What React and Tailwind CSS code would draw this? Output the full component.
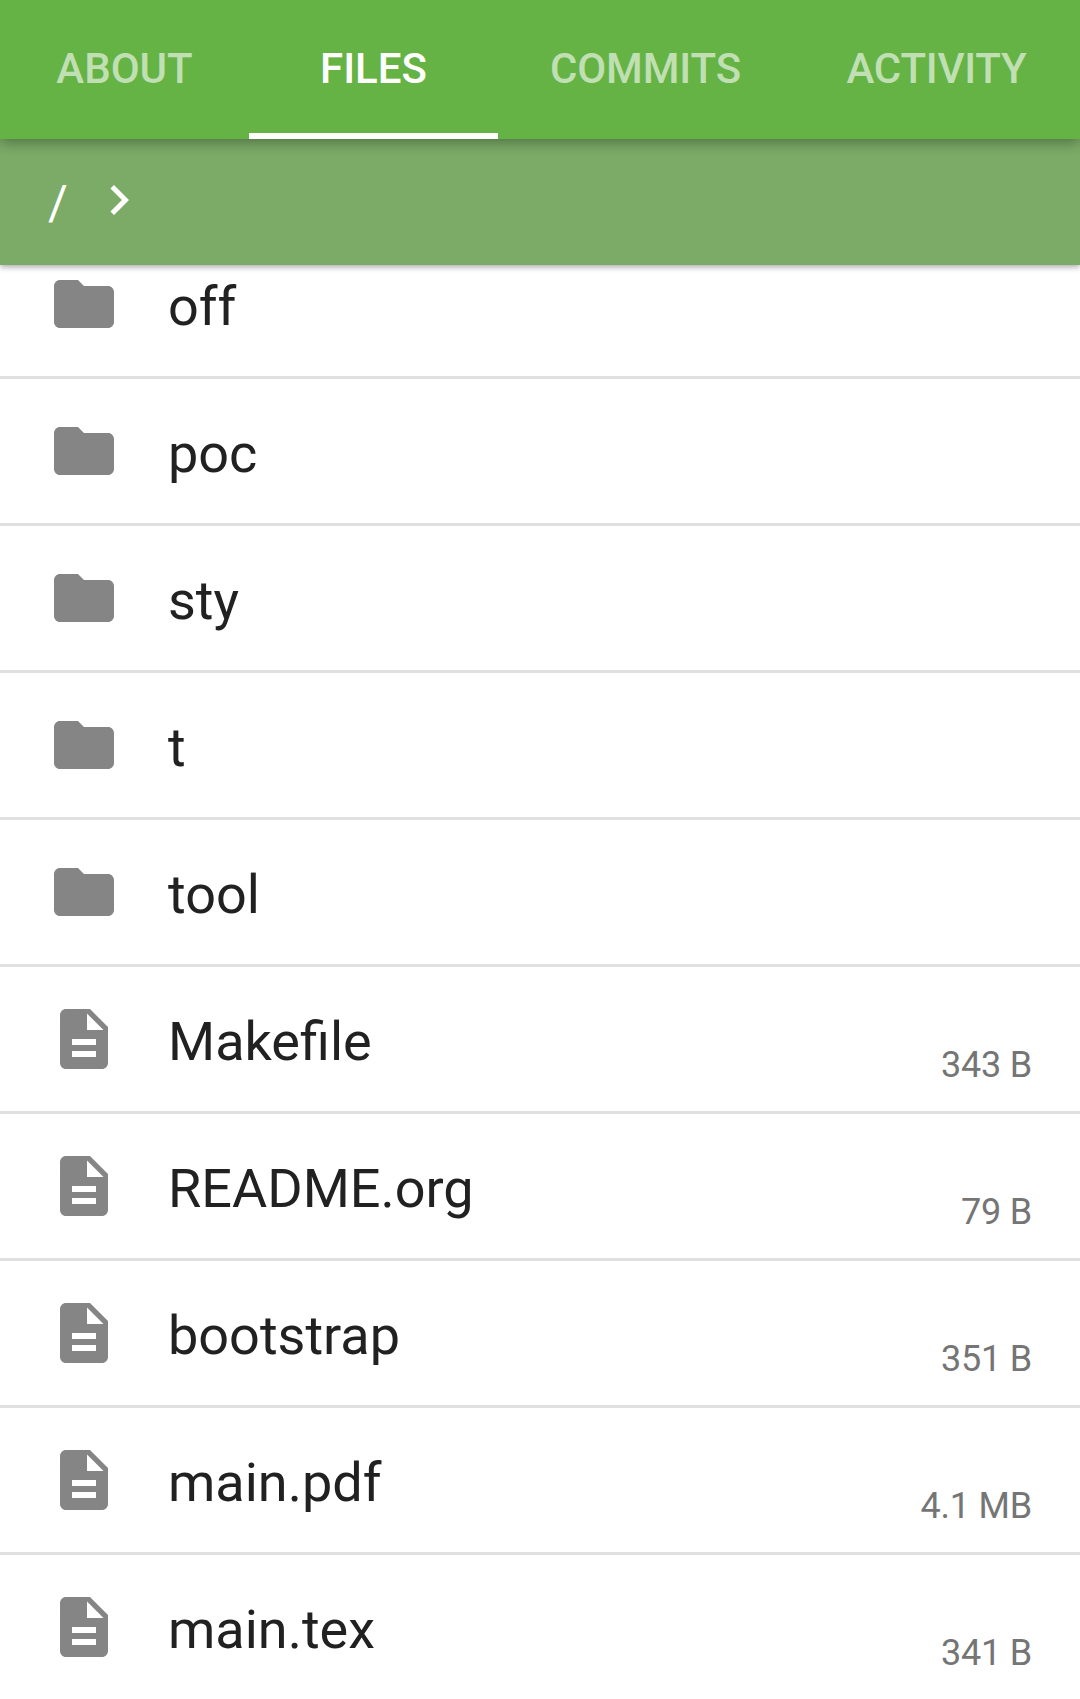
const tabs = [
  { label: 'ABOUT', width: 'w-[249px]' },
  { label: 'FILES', width: 'w-[249px]', active: true },
  { label: 'COMMITS', width: 'w-[295px]', tracking: 'tracking-[-0.1px]' },
  { label: 'ACTIVITY', width: 'w-[287px]', tracking: 'tracking-[-0.25px]' },
];

const entries = [
  { name: 'off', folder: true },
  { name: 'poc', folder: true },
  { name: 'sty', folder: true },
  { name: 't', folder: true },
  { name: 'tool', folder: true },
  { name: 'Makefile', size: '343 B' },
  { name: 'README.org', size: '79 B' },
  { name: 'bootstrap', size: '351 B' },
  { name: 'main.pdf', size: '4.1 MB' },
  { name: 'main.tex', size: '341 B' },
];

function EntryIcon({ folder }) {
  return (
    <svg viewBox="0 0 24 24" className="size-[72px] shrink-0 fill-[#858585]">
      {folder ? (
        <path d="M10 4H4c-1.1 0-1.99.9-1.99 2L2 18c0 1.1.9 2 2 2h16c1.1 0 2-.9 2-2V8c0-1.1-.9-2-2-2h-8l-2-2z" />
      ) : (
        <path d="M14 2H6c-1.1 0-1.99.9-1.99 2L4 20c0 1.1.89 2 1.99 2H18c1.1 0 2-.9 2-2V8l-6-6zm2 16H8v-2h8v2zm0-4H8v-2h8v2zm-3-5V3.500L18.500 9H13z" />
      )}
    </svg>
  );
}

export default function App() {
  return (
    <div className="flex h-[1699px] w-[1080px] flex-col overflow-hidden bg-white font-['Roboto',sans-serif]">
      <nav className="relative z-20 flex h-[139px] shrink-0 bg-[#65b245] shadow-[0_4px_12px_rgba(0,0,0,0.32)]">
        {tabs.map((tab) => (
          <div
            key={tab.label}
            className={`flex shrink-0 justify-center border-b-6 pt-[38px] text-[42px] leading-[62px] font-medium ${tab.width} ${tab.tracking ?? ''} ${
              tab.active ? 'border-white text-white' : 'border-transparent text-white/60'
            }`}
          >
            {tab.label}
          </div>
        ))}
      </nav>
      <div className="relative z-10 flex h-[126px] shrink-0 items-center bg-[#7bab67] pl-[48px] text-white shadow-[0_2px_6px_rgba(0,0,0,0.35)]">
        <span className="w-[41px] pt-[2px] text-[48px] leading-[60px]">/</span>
        <svg viewBox="0 0 24 24" className="mb-[4px] size-[60px] fill-white">
          <path d="M10 6 8.590 7.410 13.170 12l-4.580 4.590L10 18l6-6z" />
        </svg>
      </div>
      <ul className="-mt-[33px]">
        {entries.map((entry) => (
          <li key={entry.name} className="flex h-[147px] items-center border-b-3 border-[#e0e0e0] pr-[48px] pl-[48px]">
            <EntryIcon folder={entry.folder} />
            <span className="ml-[48px] grow pt-[6px] text-[54px] leading-[64px] text-[#212121]">{entry.name}</span>
            <span className="mt-[52px] text-[36px] leading-[42px] tracking-[-0.2px] text-[#757575]">{entry.size}</span>
          </li>
        ))}
      </ul>
    </div>
  );
}
